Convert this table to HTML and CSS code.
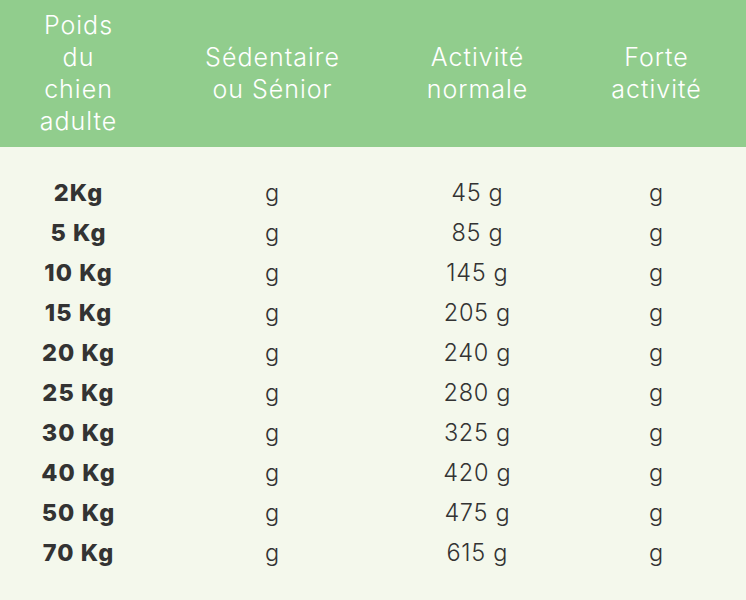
FILE: index.html
```html
<!DOCTYPE html>
<html lang="fr">
<head>
<meta charset="utf-8">
<title>Ration</title>
<link rel="stylesheet" href="styles.css">
</head>
<body>
<div class="table">
  <div class="head">
    <div class="hcell first">Poids du chien adulte</div>
    <div class="hcell wide">Sédentaire ou Sénior</div>
    <div class="hcell">Activité normale</div>
    <div class="hcell">Forte activité</div>
  </div>
  <div class="body">
    <div class="row"><div class="cell kg">2Kg</div><div class="cell">g</div><div class="cell">45 g</div><div class="cell">g</div></div>
    <div class="row"><div class="cell kg">5 Kg</div><div class="cell">g</div><div class="cell">85 g</div><div class="cell">g</div></div>
    <div class="row"><div class="cell kg">10 Kg</div><div class="cell">g</div><div class="cell">145 g</div><div class="cell">g</div></div>
    <div class="row"><div class="cell kg">15 Kg</div><div class="cell">g</div><div class="cell">205 g</div><div class="cell">g</div></div>
    <div class="row"><div class="cell kg">20 Kg</div><div class="cell">g</div><div class="cell">240 g</div><div class="cell">g</div></div>
    <div class="row"><div class="cell kg">25 Kg</div><div class="cell">g</div><div class="cell">280 g</div><div class="cell">g</div></div>
    <div class="row"><div class="cell kg">30 Kg</div><div class="cell">g</div><div class="cell">325 g</div><div class="cell">g</div></div>
    <div class="row"><div class="cell kg">40 Kg</div><div class="cell">g</div><div class="cell">420 g</div><div class="cell">g</div></div>
    <div class="row"><div class="cell kg">50 Kg</div><div class="cell">g</div><div class="cell">475 g</div><div class="cell">g</div></div>
    <div class="row"><div class="cell kg">70 Kg</div><div class="cell">g</div><div class="cell">615 g</div><div class="cell">g</div></div>
  </div>
</div>
</body>
</html>
```
FILE: styles.css
```css
html, body {
  margin: 0;
  padding: 0;
  background: #f4f8ec;
}
body {
  font-family: Inter, "Noto Sans", sans-serif;
  color: #333333;
  width: 746px;
  height: 600px;
  overflow: hidden;
}
.table {
  width: 746px;
}
.head, .row {
  display: grid;
  grid-template-columns: 156px 232px 178px 180px;
}
.head {
  background: #91cd8d;
  padding: 9px 0 10px;
  align-items: center;
}
.hcell {
  color: #ffffff;
  font-size: 25px;
  font-weight: 300;
  line-height: 32px;
  text-align: center;
  padding: 0 12px 0 13px;
  letter-spacing: 1px;
}
.hcell.first {
  padding: 0 30px 0 31px;
}
.hcell.wide {
  padding: 0 40px 0 41px;
}
.body {
  padding: 26px 0 27px;
}
.cell {
  font-size: 23.5px;
  line-height: 40px;
  text-align: center;
  font-weight: 300;
  letter-spacing: 0.7px;
  padding-left: 0.7px;
}
.cell.kg {
  font-weight: 800;
  font-size: 23.5px;
  letter-spacing: 1.1px;
  padding-left: 1.1px;
}
```
